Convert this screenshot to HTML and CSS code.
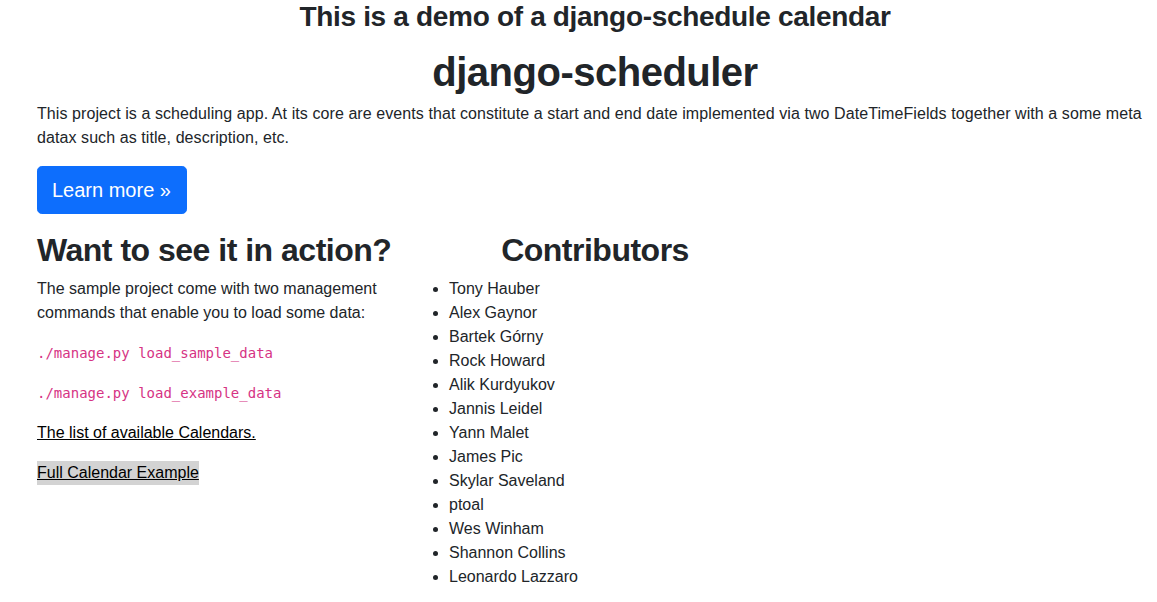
FILE: index.html
```html
<!DOCTYPE html>
<html lang="en">
<head>
<meta charset="utf-8">
<title>django-scheduler demo</title>
<link rel="stylesheet" href="styles.css">
</head>
<body>
<div class="page">
  <h3 class="demo-title">This is a demo of a django-schedule calendar</h3>
  <h1 class="main-title">django-scheduler</h1>
  <p class="lead-text">This project is a scheduling app. At its core are events that constitute a start and end date implemented via two DateTimeFields together with a some meta datax such as title, description, etc.</p>
  <p class="btn-row"><a class="btn-learn" href="#">Learn more &raquo;</a></p>
  <div class="cols">
    <div class="col">
      <h2 class="col-title">Want to see it in action?</h2>
      <p>The sample project come with two management commands that enable you to load some data:</p>
      <p><code>./manage.py load_sample_data</code></p>
      <p><code>./manage.py load_example_data</code></p>
      <p><a class="plain-link" href="#">The list of available Calendars.</a></p>
      <p><a class="plain-link highlight" href="#">Full Calendar Example</a></p>
    </div>
    <div class="col">
      <h2 class="col-title centered">Contributors</h2>
      <ul class="contributors">
        <li>Tony Hauber</li>
        <li>Alex Gaynor</li>
        <li>Bartek Górny</li>
        <li>Rock Howard</li>
        <li>Alik Kurdyukov</li>
        <li>Jannis Leidel</li>
        <li>Yann Malet</li>
        <li>James Pic</li>
        <li>Skylar Saveland</li>
        <li>ptoal</li>
        <li>Wes Winham</li>
        <li>Shannon Collins</li>
        <li>Leonardo Lazzaro</li>
      </ul>
    </div>
  </div>
</div>
</body>
</html>
```
FILE: styles.css
```css
html, body {
  margin: 0;
  padding: 0;
  background: #fff;
}
body {
  font-family: "Liberation Sans", Arial, sans-serif;
  font-size: 16px;
  line-height: 24px;
  color: #212529;
}
.page {
  padding: 0 4px 0 37px;
}
h1, h2, h3 {
  font-weight: 700;
  line-height: 1.2;
  margin: 0 0 8px;
}
.demo-title {
  font-size: 28px;
  letter-spacing: -0.32px;
  text-align: center;
  margin: 0 0 14px;
}
.main-title {
  font-size: 40px;
  letter-spacing: -0.5px;
  text-align: center;
  margin: 0 0 6px;
}
p {
  margin: 0 0 16px;
}
.lead-text {
  letter-spacing: 0.08px;
}
.btn-row {
  margin: 0 0 17px;
  line-height: 0;
}
.btn-learn {
  display: inline-block;
  background: #0d6efd;
  color: #fff;
  text-decoration: none;
  font-size: 20px;
  line-height: 30px;
  padding: 8px 15px 8px 14px;
  border: 1px solid #0d6efd;
  border-radius: 4.8px;
}
.cols {
  display: grid;
  grid-template-columns: repeat(3, 1fr);
}
.col-title {
  font-size: 32px;
  letter-spacing: -0.5px;
}
.centered {
  text-align: center;
}
code {
  font-family: "DejaVu Sans Mono", monospace;
  font-size: 14px;
  color: #d63384;
}
.plain-link {
  color: #000;
  text-decoration: underline;
}
.highlight {
  display: inline-block;
  background: #d3d3d3;
}
.contributors {
  margin: 0;
  padding-left: 40px;
}
```
